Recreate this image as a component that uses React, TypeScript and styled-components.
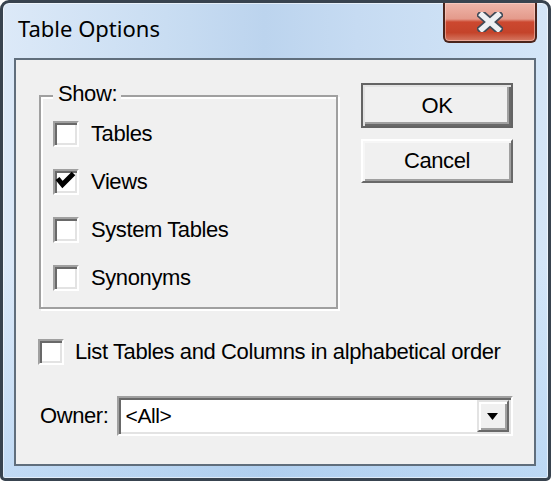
import React from 'react';
import styled, { createGlobalStyle } from 'styled-components';

const GlobalStyle = createGlobalStyle`
  html, body {
    margin: 0;
    padding: 0;
    background: #ffffff;
  }
  * {
    box-sizing: border-box;
  }
`;

const uiFont = `'Liberation Sans', Arial, sans-serif`;

const Window = styled.div`
  width: 551px;
  height: 481px;
  border: 3px solid #38434f;
  border-radius: 9px 9px 5px 5px;
  background:
    linear-gradient(to bottom, rgba(255, 255, 255, 0) 55%, rgba(160, 200, 240, 0.45) 100%),
    linear-gradient(to right, #dce9f8 0%, #c9ddf2 30%, #bcd4ee 48%, #c6dbf2 65%, #d4e6f8 100%);
  box-shadow: inset 0 0 0 1px rgba(255, 255, 255, 0.55);
  display: flex;
  flex-direction: column;
  padding: 0 12px 12px 11px;
  font-family: ${uiFont};
`;

const TitleBar = styled.div`
  height: 55px;
  display: flex;
  justify-content: space-between;
  align-items: flex-start;
  padding-left: 4px;
`;

const Title = styled.div`
  margin-top: 11px;
  font-family: 'Noto Sans', 'Liberation Sans', sans-serif;
  font-size: 22px;
  line-height: 28px;
  color: #000;
`;

const CloseButton = styled.div`
  width: 94px;
  height: 40px;
  margin-right: -1px;
  border: 2px solid #4a241c;
  border-top: none;
  border-radius: 0 0 6px 6px;
  background: linear-gradient(
    to bottom,
    #eeb6aa 0%,
    #e49a8b 42%,
    #cc4830 50%,
    #c4432a 78%,
    #d67a64 100%
  );
  box-shadow: inset 0 0 0 1px rgba(255, 220, 210, 0.5);
  display: flex;
  align-items: center;
  justify-content: center;
`;

const Client = styled.div`
  flex: 1;
  border: 2px solid #606e7c;
  background: #f0f0f0;
  display: flex;
  flex-direction: column;
  font-size: 22px;
  letter-spacing: -0.4px;
  color: #000;
`;

const TopSection = styled.div`
  display: flex;
  align-items: flex-start;
  padding-left: 23px;
`;

const GroupBox = styled.div`
  position: relative;
  margin-top: 35px;
  width: 299px;
  height: 214px;
  border: 2px solid #a0a0a0;
  box-shadow: inset 2px 2px 0 #ffffff, 2px 2px 0 #ffffff;
  padding: 13px 0 0 12px;
  display: flex;
  flex-direction: column;
`;

const Legend = styled.span`
  position: absolute;
  top: -15px;
  left: 12px;
  padding: 0 4px 0 5px;
  background: #f0f0f0;
  line-height: 24px;
`;

const CheckRow = styled.label<{ $height?: number; $gap?: number }>`
  display: flex;
  align-items: center;
  height: ${(p) => p.$height ?? 48}px;
  gap: ${(p) => p.$gap ?? 12}px;
  line-height: 24px;
`;

const Box = styled.span`
  width: 26px;
  height: 26px;
  flex: none;
  background: #ffffff;
  border: 2px solid;
  border-color: #a0a0a0 #ffffff #ffffff #a0a0a0;
  box-shadow: inset 2px 2px 0 #696969, inset -2px -2px 0 #e3e3e3;
  display: flex;
  align-items: center;
  justify-content: center;
`;

const ButtonColumn = styled.div`
  margin-left: 23px;
  margin-top: 23px;
  display: flex;
  flex-direction: column;
  gap: 11px;
`;

const PushButton = styled.div<{ $default?: boolean }>`
  width: 152px;
  height: ${(p) => (p.$default ? 45 : 44)}px;
  background: #f0f0f0;
  display: flex;
  align-items: center;
  justify-content: center;
  line-height: 24px;
  border: 2px solid;
  ${(p) =>
    p.$default
      ? `
    border-color: #646464;
    box-shadow: inset 2px 2px 0 #e3e3e3, inset -2px -2px 0 #696969, inset -4px -4px 0 #a0a0a0;
  `
      : `
    border-color: #ffffff #696969 #696969 #ffffff;
    box-shadow: inset 2px 2px 0 #f6f6f6, inset -2px -2px 0 #a0a0a0;
  `}
`;

const ListRow = styled.div`
  margin-top: 27px;
  padding-left: 22px;
`;

const OwnerRow = styled.div`
  margin-top: 28px;
  padding-left: 24px;
  display: flex;
  align-items: center;
  gap: 8px;
  line-height: 24px;
`;

const Combo = styled.div`
  width: 396px;
  height: 40px;
  background: #ffffff;
  border: 2px solid;
  border-color: #a0a0a0 #ffffff #ffffff #a0a0a0;
  box-shadow: inset 2px 2px 0 #696969, inset -2px -2px 0 #e3e3e3;
  display: flex;
  align-items: center;
  padding: 2px 2px 2px 7px;
`;

const ComboText = styled.span`
  flex: 1;
  font-size: 21px;
`;

const DropButton = styled.div`
  width: 32px;
  height: 32px;
  background: #f0f0f0;
  border: 2px solid;
  border-color: #e3e3e3 #696969 #696969 #e3e3e3;
  box-shadow: inset 2px 2px 0 #ffffff, inset -2px -2px 0 #a0a0a0;
  display: flex;
  align-items: center;
  justify-content: center;
`;

function CloseGlyph() {
  return (
    <svg width='26' height='20' viewBox='0 0 26 20'>
      <path d='M5 3 L21 17 M21 3 L5 17' stroke='#414b58' strokeWidth='9' strokeLinecap='square' />
      <path d='M5 3 L21 17 M21 3 L5 17' stroke='#eef0f3' strokeWidth='5.5' strokeLinecap='square' />
    </svg>
  );
}

function Check() {
  return (
    <svg width='22' height='22' viewBox='0 0 22 22'>
      <polyline points='2.5,7.5 7.5,13.5 18.5,2.5' fill='none' stroke='#000' strokeWidth='5' />
    </svg>
  );
}

function Checkbox({ checked = false }: { checked?: boolean }) {
  return <Box>{checked && <Check />}</Box>;
}

const showItems = [
  { label: 'Tables', checked: false },
  { label: 'Views', checked: true },
  { label: 'System Tables', checked: false },
  { label: 'Synonyms', checked: false },
];

export default function App() {
  return (
    <>
      <GlobalStyle />
      <Window>
        <TitleBar>
          <Title>Table Options</Title>
          <CloseButton>
            <CloseGlyph />
          </CloseButton>
        </TitleBar>
        <Client>
          <TopSection>
            <GroupBox>
              <Legend>Show:</Legend>
              {showItems.map((item) => (
                <CheckRow key={item.label}>
                  <Checkbox checked={item.checked} />
                  {item.label}
                </CheckRow>
              ))}
            </GroupBox>
            <ButtonColumn>
              <PushButton $default>OK</PushButton>
              <PushButton>Cancel</PushButton>
            </ButtonColumn>
          </TopSection>
          <ListRow>
            <CheckRow $height={32} $gap={11}>
              <Checkbox />
              List Tables and Columns in alphabetical order
            </CheckRow>
          </ListRow>
          <OwnerRow>
            Owner:
            <Combo>
              <ComboText>&lt;All&gt;</ComboText>
              <DropButton>
                <svg width='11' height='7' viewBox='0 0 11 7'>
                  <polygon points='0,0 11,0 5.5,7' fill='#000' />
                </svg>
              </DropButton>
            </Combo>
          </OwnerRow>
        </Client>
      </Window>
    </>
  );
}
